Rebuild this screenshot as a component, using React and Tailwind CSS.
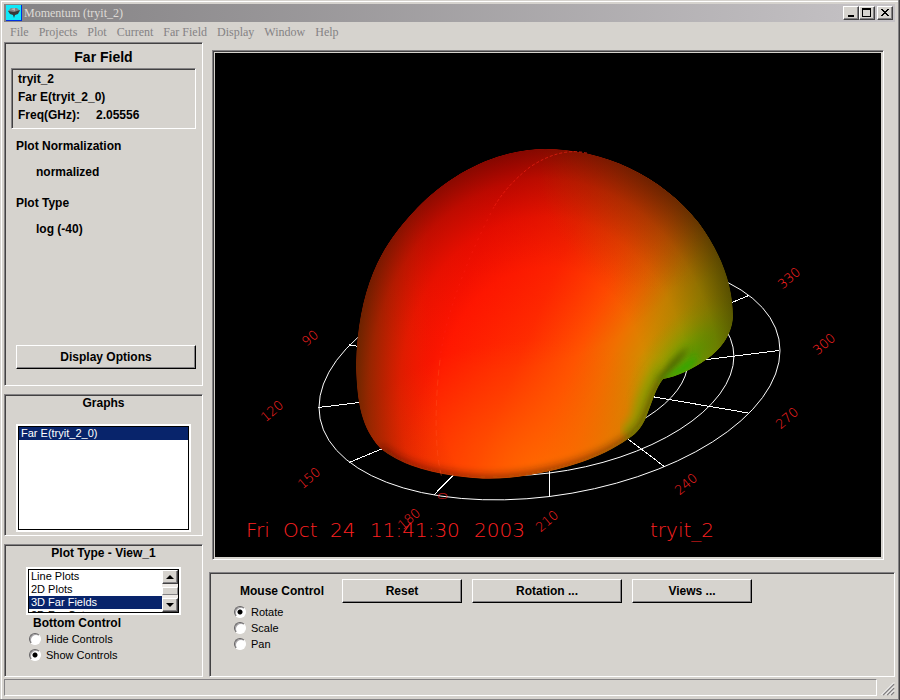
import { useState } from "react";

const SUNKEN =
  "border border-t-[#848284] border-l-[#848284] border-r-white border-b-white shadow-[inset_1px_1px_0_#424142]";
const BUTTON =
  "h-6 border border-t-white border-l-white border-r-black border-b-black bg-[#d6d3ce] text-xs font-bold shadow-[inset_-1px_-1px_0_#848284] active:shadow-none";
const CAPTION_BUTTON =
  "flex h-[14px] w-4 items-center justify-center border border-t-white border-l-white border-r-[#424142] border-b-[#424142] bg-[#d6d3ce] shadow-[inset_-1px_-1px_0_#848284]";
const LIST =
  "appearance-none overflow-hidden rounded-none bg-white text-[11px] outline-none";
const OPTION =
  "block h-[13px] min-h-0 px-[2px] py-0 text-[11px] leading-[13px] text-black checked:bg-[linear-gradient(#08246b,#08246b)] checked:text-white";

const MENUS = ["File", "Projects", "Plot", "Current", "Far Field", "Display", "Window", "Help"];

const ANGLES = [
  ["90", 310, 338],
  ["120", 272, 411],
  ["150", 309, 478],
  ["180", 409, 519],
  ["210", 547, 521],
  ["240", 686, 484],
  ["270", 787, 418],
  ["300", 824, 344],
  ["330", 789, 278],
];

const STAMP = [
  ["Fri", 246],
  ["Oct", 283],
  ["24", 330],
  ["11:41:30", 370],
  ["2003", 474],
];

const SPOKES = [0, 30, 60, 90, 120, 150, 180, 210, 240, 270, 300, 330];

const LOBE =
  "M545 149 C603 149 661 175 699 223 C722 255 733 285 733 317 C732 336 719 351 707 359 C692 370 678 376 663 379 C655 390 653 400 648 412 C644 424 638 433 628 439 C600 459 565 469 530 475 C508 479 485 480 463 477 C428 473 399 464 380 448 C362 428 357 405 356 365 C357 327 363 298 373 273 C383 248 398 228 417 208 C453 171 500 149 545 149 Z";

const LOWER_EDGE =
  "M663 379 C655 390 653 400 648 412 C644 424 638 433 628 439 C600 459 565 469 530 475 C508 479 485 480 463 477 C428 473 399 464 380 448";

function FarFieldPlot() {
  return (
    <svg viewBox="215 53 666 504" className="block h-full w-full bg-black" role="img" aria-label="3D far field">
      <defs>
        <linearGradient id="hue" gradientUnits="userSpaceOnUse" x1="450" y1="320" x2="692" y2="421">
          <stop offset="0" stopColor="#ff1600" />
          <stop offset="0.3" stopColor="#ff3000" />
          <stop offset="0.5" stopColor="#ff5400" />
          <stop offset="0.62" stopColor="#f07000" />
          <stop offset="0.73" stopColor="#d48a00" />
          <stop offset="0.84" stopColor="#b89800" />
          <stop offset="1" stopColor="#989a00" />
        </linearGradient>
        <radialGradient id="cool" gradientUnits="userSpaceOnUse" cx="0" cy="0" r="1" gradientTransform="translate(692 356) rotate(-45) scale(85 42)">
          <stop offset="0" stopColor="#64aa00" stopOpacity="1" />
          <stop offset="0.35" stopColor="#80aa00" stopOpacity="0.8" />
          <stop offset="0.7" stopColor="#9aa600" stopOpacity="0.35" />
          <stop offset="1" stopColor="#a89a00" stopOpacity="0" />
        </radialGradient>
        <radialGradient id="redder" gradientUnits="userSpaceOnUse" cx="500" cy="140" r="230">
          <stop offset="0" stopColor="#e80000" stopOpacity="0.8" />
          <stop offset="1" stopColor="#ff0800" stopOpacity="0" />
        </radialGradient>
        <radialGradient id="brown" gradientUnits="userSpaceOnUse" cx="660" cy="170" r="120">
          <stop offset="0" stopColor="#b03800" stopOpacity="0.6" />
          <stop offset="1" stopColor="#c05000" stopOpacity="0" />
        </radialGradient>
        <radialGradient id="warm" gradientUnits="userSpaceOnUse" cx="0" cy="0" r="1" gradientTransform="translate(540 470) scale(200 130)">
          <stop offset="0" stopColor="#ff6c00" stopOpacity="0.8" />
          <stop offset="1" stopColor="#ff5000" stopOpacity="0" />
        </radialGradient>
        <linearGradient id="rim" gradientUnits="userSpaceOnUse" x1="356" y1="0" x2="430" y2="0">
          <stop offset="0" stopColor="#6a5000" stopOpacity="0.6" />
          <stop offset="1" stopColor="#ff3000" stopOpacity="0" />
        </linearGradient>
        <radialGradient id="shade" gradientUnits="userSpaceOnUse" cx="0" cy="0" r="1" gradientTransform="translate(545 395) scale(208 254)">
          <stop offset="0.5" stopColor="#100800" stopOpacity="0" />
          <stop offset="0.7" stopColor="#100800" stopOpacity="0.09" />
          <stop offset="0.85" stopColor="#100800" stopOpacity="0.25" />
          <stop offset="1" stopColor="#100800" stopOpacity="0.55" />
        </radialGradient>
        <filter id="soft" x="-20%" y="-20%" width="140%" height="140%">
          <feGaussianBlur stdDeviation="4" />
        </filter>
        <filter id="fine" x="-50%" y="-50%" width="200%" height="200%">
          <feGaussianBlur stdDeviation="3" />
        </filter>
        <clipPath id="lobe">
          <path d={LOBE} />
        </clipPath>
      </defs>

      <g stroke="#fff" fill="none" strokeWidth="1" shapeRendering="crispEdges">
        {[1, 0.8, 0.6].map((r) => (
          <circle key={r} r={r} transform="matrix(230.5 -28.5 0 117.5 549.5 379)" vectorEffect="non-scaling-stroke" />
        ))}
        {SPOKES.map((deg) => {
          const a = (deg * Math.PI) / 180;
          return (
            <line
              key={deg}
              x1="549"
              y1="379"
              x2={549 + 230.5 * Math.cos(a)}
              y2={379 - 28.5 * Math.cos(a) + 117.5 * Math.sin(a)}
            />
          );
        })}
      </g>

      <g clipPath="url(#lobe)">
        <path d={LOBE} fill="url(#hue)" />
        <path d={LOBE} fill="url(#redder)" />
        <path d={LOBE} fill="url(#brown)" />
        <path d={LOBE} fill="url(#warm)" />
        <path d={LOBE} fill="url(#rim)" />
        <path d={LOBE} fill="url(#cool)" />
        <path d="M668 372 Q650 395 645 418 Q640 432 628 440" fill="none" stroke="#8c9c00" strokeOpacity="0.8" strokeWidth="28" filter="url(#soft)" />
        <path d={LOBE} fill="url(#shade)" />
        <path d={LOWER_EDGE} fill="none" stroke="#281800" strokeOpacity="0.6" strokeWidth="6" filter="url(#soft)" />
        <path d="M658 380 Q668 360 689 346 Q684 360 662 381 Z" fill="#3c5000" fillOpacity="0.75" filter="url(#fine)" />
        <path d="M661 381 Q680 364 698 356 Q696 372 663 381 Z" fill="#26a800" fillOpacity="0.85" filter="url(#fine)" />
      </g>

      <g fill="none" stroke="#ff2418" strokeWidth="1">
        <path d="M587 153 Q560 147 530 167 Q506 186 494 207" strokeDasharray="3 2" strokeOpacity="0.6" />
        <path d="M494 207 C466 260 444 320 440 360" strokeDasharray="2 5" strokeOpacity="0.4" />
        <path d="M440 360 C435 400 434 450 442 478" stroke="#ff5020" strokeDasharray="6 4" strokeOpacity="0.45" />
      </g>

      <g fill="#ff2020" fontFamily="'DejaVu Sans', sans-serif" fontWeight="200">
        {ANGLES.map(([label, x, y]) => (
          <text key={label} fontSize="13" textAnchor="middle" dominantBaseline="central" transform={`translate(${x} ${y}) rotate(-40)`}>
            {label}
          </text>
        ))}
        <text fontSize="13" textAnchor="middle" dominantBaseline="central" transform="translate(442 496) rotate(-90)">
          0
        </text>
        <text y="537" fontSize="20">
          {STAMP.map(([word, x]) => (
            <tspan key={word} x={x}>
              {word}
            </tspan>
          ))}
        </text>
        <text x="650" y="537" fontSize="20">
          tryit_2
        </text>
      </g>
    </svg>
  );
}

function Radio({ name, label, checked, onChange }) {
  return (
    <label className="flex h-4 items-center gap-[5px] text-[11px]">
      <input
        type="radio"
        name={name}
        checked={checked}
        onChange={onChange}
        className="m-0 size-3 appearance-none rounded-full border border-t-[#636163] border-l-[#636163] border-r-white border-b-white bg-white shadow-[inset_1px_1px_0_#a5a2a5] checked:bg-[radial-gradient(circle,black_2px,white_3px)]"
      />
      {label}
    </label>
  );
}

export default function App() {
  const [mouse, setMouse] = useState("Rotate");
  const [bottom, setBottom] = useState("Show Controls");

  return (
    <div className="flex min-h-screen flex-col border-r border-b border-[#424142] bg-[#d6d3ce] font-['Liberation_Sans',Arial,sans-serif] text-xs text-black shadow-[inset_-1px_-1px_0_#848284,inset_1px_1px_0_#d6d3ce,inset_2px_2px_0_#fff]">
      <header className="mx-1 mt-1 flex h-[18px] items-center bg-linear-to-r from-[#848284] to-[#c6c3c6] px-[2px]">
        <svg viewBox="0 0 16 16" className="size-4" aria-hidden="true">
          <rect width="16" height="16" fill="#0030e0" />
          <rect width="15" height="15" fill="#10e8f8" />
          <path d="M2 6 L5 3 L11 3 L14 6 L11 8 L5 8 Z" fill="#848284" />
          <path d="M2 6 L8 7 L14 5 L12 9 L9 10 L8 13 L7 10 L4 9 Z" fill="#383838" />
          <path d="M5 4 L9 3 L9 6 Z" fill="#b8b8b8" />
        </svg>
        <h1 className="ml-[2px] font-['Liberation_Serif',serif] text-xs text-[#dedbd6]">Momentum (tryit_2)</h1>
        <div className="ml-auto flex">
          <button type="button" aria-label="Minimize" className={CAPTION_BUTTON}>
            <svg viewBox="0 0 12 10" className="h-[10px] w-3" shapeRendering="crispEdges"><path d="M3 7h6v2h-6z" /></svg>
          </button>
          <button type="button" aria-label="Maximize" className={CAPTION_BUTTON}>
            <svg viewBox="0 0 12 10" className="h-[10px] w-3" shapeRendering="crispEdges"><path d="M1 0h9v9h-9z M2 2v6h7v-6z" fillRule="evenodd" /></svg>
          </button>
          <button type="button" aria-label="Close" className={`${CAPTION_BUTTON} ml-[2px]`}>
            <svg viewBox="0 0 12 10" className="h-[10px] w-3" shapeRendering="crispEdges"><path d="M2 1h2v1h1v1h2v-1h1v-1h2v1h-1v1h-1v1h-1v1h1v1h1v1h1v1h-2v-1h-1v-1h-2v1h-1v1h-2v-1h1v-1h1v-1h1v-1h-1v-1h-1v-1h-1z" /></svg>
          </button>
        </div>
      </header>

      <nav className="flex h-5 items-center gap-[10px] pl-[10px] font-['Liberation_Serif',serif] text-xs text-[#848284]">
        {MENUS.map((m) => (
          <button key={m} type="button">{m}</button>
        ))}
      </nav>

      <main className="flex flex-1 gap-[6px] px-1">
        <aside className="flex w-[199px] shrink-0 flex-col gap-2">
          <section className={`${SUNKEN} flex flex-1 flex-col px-[6px]`}>
            <h2 className="mt-[5px] text-center text-sm leading-[18px] font-bold">Far Field</h2>
            <div className={`${SUNKEN} mt-[2px] h-[61px] px-[6px] py-[1px] leading-[18px] font-bold`}>
              <p>tryit_2</p>
              <p>Far E(tryit_2_0)</p>
              <p className="flex gap-4"><span>Freq(GHz):</span><span>2.05556</span></p>
            </div>
            <dl className="mt-[9px] pl-[5px] leading-[16px] font-bold">
              <dt>Plot Normalization</dt>
              <dd className="mt-[10px] ml-5">normalized</dd>
              <dt className="mt-[15px]">Plot Type</dt>
              <dd className="mt-[10px] ml-5">log (-40)</dd>
            </dl>
            <button type="button" className={`${BUTTON} mt-auto mb-4 ml-[5px]`}>Display Options</button>
          </section>

          <section className={`${SUNKEN} h-[142px] px-[11px]`}>
            <label htmlFor="graphs" className="block text-center leading-[16px] font-bold">Graphs</label>
            <div className="mt-[13px] border-2 border-white">
              <select id="graphs" size={8} defaultValue="far" className={`${LIST} block h-[104px] w-full border border-black p-0`}>
                <option value="far" className={OPTION}>Far E(tryit_2_0)</option>
              </select>
            </div>
          </section>

          <section className={`${SUNKEN} h-[133px] px-[21px]`}>
            <label htmlFor="plots" className="block text-center leading-[16px] font-bold">Plot Type - View_1</label>
            <div className="mt-[6px] border-2 border-white">
              <div className="flex h-11 border border-black bg-white">
                <select id="plots" size={4} defaultValue="3d" className={`${LIST} h-[42px] min-w-0 flex-1 border-0 p-0`}>
                  <option value="line" className={OPTION}>Line Plots</option>
                  <option value="2d" className={OPTION}>2D Plots</option>
                  <option value="3d" className={OPTION}>3D Far Fields</option>
                  <option value="cut" className={OPTION}>2D Far Cuts</option>
                </select>
                <div className="flex w-4 flex-col bg-[#efebe7]">
                  <button type="button" aria-label="Scroll up" className={CAPTION_BUTTON}>
                    <svg viewBox="0 0 8 4" className="h-1 w-2"><path d="M0 4L4 0L8 4z" /></svg>
                  </button>
                  <div className="mt-[3px] h-2 border border-t-white border-l-white border-r-[#848284] border-b-[#848284] bg-[#d6d3ce]" />
                  <button type="button" aria-label="Scroll down" className={`${CAPTION_BUTTON} mt-auto`}>
                    <svg viewBox="0 0 8 4" className="h-1 w-2"><path d="M0 0L4 4L8 0z" /></svg>
                  </button>
                </div>
              </div>
            </div>
            <fieldset className="pl-[3px]">
              <legend className="pl-1 leading-[16px] font-bold">Bottom Control</legend>
              {["Hide Controls", "Show Controls"].map((l) => (
                <Radio key={l} name="bottom" label={l} checked={bottom === l} onChange={() => setBottom(l)} />
              ))}
            </fieldset>
          </section>
        </aside>

        <div className="flex min-w-0 flex-1 flex-col pt-2">
          <div className={`${SUNKEN} mr-[11px] ml-[3px] min-h-0 flex-1 p-[2px]`}>
            <FarFieldPlot />
          </div>
          <section className={`${SUNKEN} mt-3 flex h-[105px] items-start gap-[10px] px-6 pt-[6px]`}>
            <fieldset className="w-[98px]">
              <legend className="pt-1 pb-[5px] pl-[6px] leading-[16px] font-bold">Mouse Control</legend>
              {["Rotate", "Scale", "Pan"].map((l) => (
                <Radio key={l} name="mouse" label={l} checked={mouse === l} onChange={() => setMouse(l)} />
              ))}
            </fieldset>
            <button type="button" className={`${BUTTON} w-[120px]`}>Reset</button>
            <button type="button" className={`${BUTTON} w-[150px]`}>Rotation ...</button>
            <button type="button" className={`${BUTTON} w-[120px]`}>Views ...</button>
          </section>
        </div>
      </main>

      <footer className="mt-[2px] mb-1 ml-1 flex items-end gap-1 pr-1">
        <div className="h-[17px] flex-1 border border-t-[#848284] border-l-[#848284] border-r-white border-b-white" />
        <svg viewBox="0 0 14 14" className="size-[14px]" aria-hidden="true">
          <g strokeWidth="1.500" stroke="#848284"><path d="M2 13L13 2M6 13L13 6M10 13L13 10" /></g>
          <g stroke="#fff"><path d="M0.500 13L13 0.500M4.500 13L13 4.500M8.500 13L13 8.500" /></g>
        </svg>
      </footer>
    </div>
  );
}
